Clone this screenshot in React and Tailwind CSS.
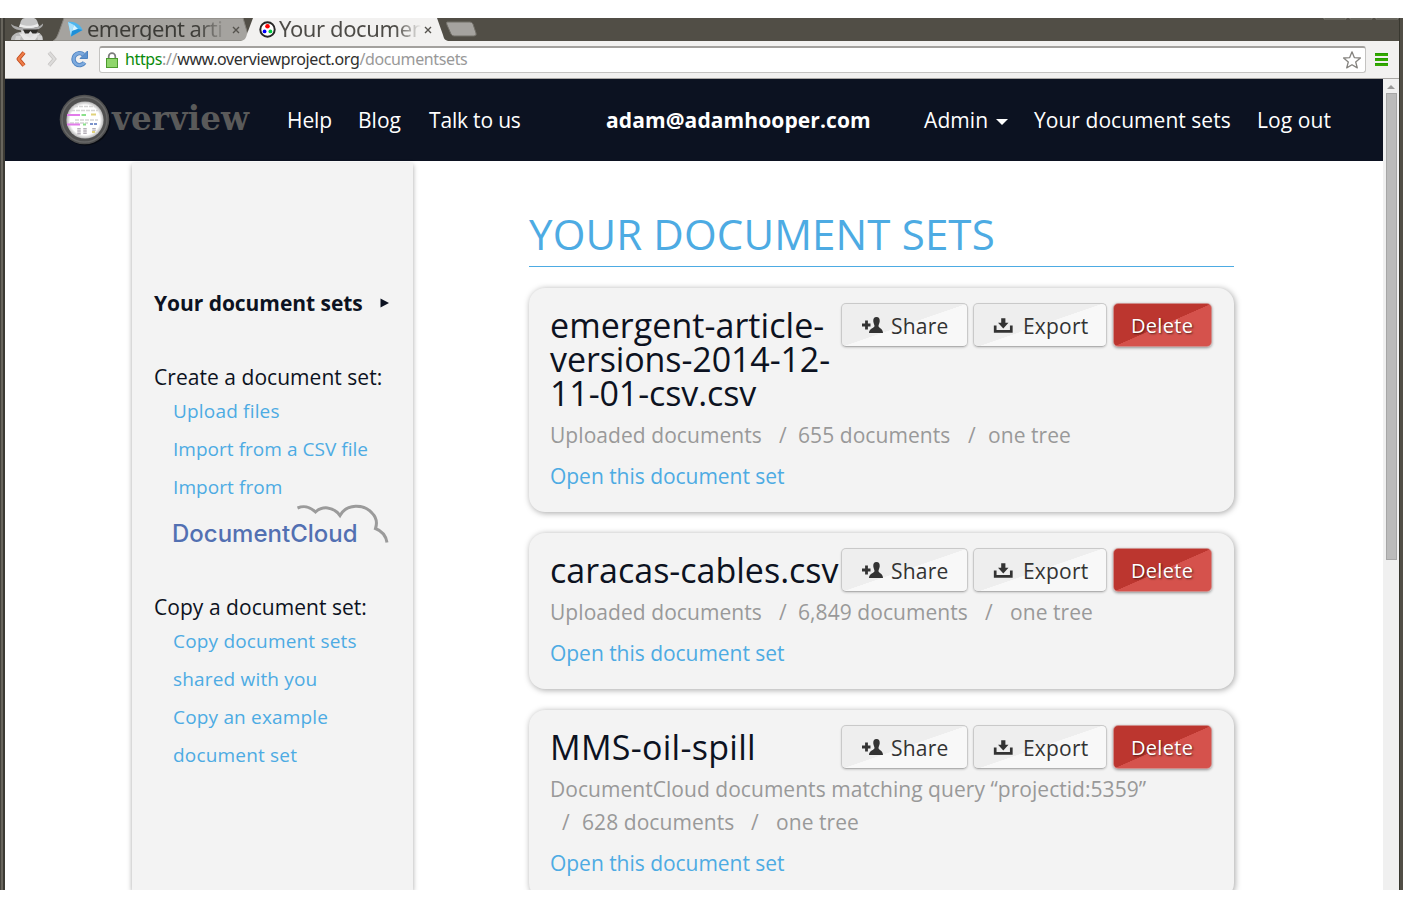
import React from "react";

function Incognito() {
  return (
    <svg width="34" height="23" viewBox="0 0 34 23" className="shrink-0">
      <path d="M0 22 C0 18 3 15 9 14 L25 14 C30 15 32 18 32 22Z" fill="#b9b9b9" />
      <path d="M10 12 H26 V18 L18 22 L11 18Z" fill="#dedede" />
      <path d="M9 8 C9 3 11 0 14 0 H23 C26 1 27 4 27.500 8Z" fill="#c6c6c6" />
      <path d="M9 6 C14 8.500 22 8.500 27 5.500 L28 8.500 C22 11 14 11 8 9Z" fill="#ececec" />
      <path d="M0 6 C4 9 10 10 18 10 C25 10 29 8.500 32 5.500 C33 10 25 13 17 13 C8 13 1 11 0 6Z" fill="#a9a9a9" />
      <path d="M12 11.500 H27 L25.500 15.500 H21.500 L19.500 13 L17.500 15.500 H14Z" fill="#2e2d2a" />
      <path d="M8 15 L13 22 H24 L29 15 L25 16 L19 20 L12 16Z" fill="#e6e6e6" />
      <path d="M5 18 H10 L9 22 H4Z M26 17 L31 18 V22 H27Z" fill="#d2d2d2" />
    </svg>
  );
}

function TabStrip() {
  return (
    <div className="relative h-[23px] overflow-hidden bg-[#514e46]">
      <svg width="1399" height="23" className="absolute left-0 top-0">
        <path d="M48 23 C51 21 52 19 54 14 L59 0 H238 L243 17 C244 20 245 22 248 23Z" fill="#a5a39f" stroke="#85827c" />
        <path d="M236 23 C240 22 241 20 242 16 L248 0 H432 L438 17 C439 21 440 22 443 23Z" fill="#f2f1f0" />
        <path d="M442 4 H465 Q467 4 468 6 L471 15 Q472 18 469 18 H449 Q447 18 446 16 L442 7 Q441 4 442 4Z" fill="#a5a39f" stroke="#716e67" />
        <path d="M1319 0 V1 H1341 V0 M1345 0 V1 H1367 V0 M1371 0 V1 H1393 V0" fill="none" stroke="#807e77" />
      </svg>
      <div className="relative flex h-[23px] items-center">
        <div className="ml-[6px] w-[56px]"><Incognito /></div>
        <svg width="16" height="16" viewBox="0 0 16 16" className="mb-[2px] mr-[4px] shrink-0">
          <path d="M1 1 C7 0 13 3 15.500 9 L4 15.500 Z" fill="#4db5ee" />
          <path d="M1 1 L7 4 L5 10 L4 15.500Z" fill="#a9e0fb" />
          <path d="M7 4 L11 8 L5 10Z" fill="#d8f3ff" />
          <path d="M11 8 L15.500 9 L4 15.500 L5 10Z" fill="#1d8fd8" />
        </svg>
        <div className="-mt-[2px] w-[145px] whitespace-nowrap bg-linear-to-r from-[#3c3b37] from-75% to-[#a5a39f] to-97% bg-clip-text font-['Noto_Sans',sans-serif] text-[22px] leading-[23px] tracking-[-0.55px] text-transparent">emergent arti</div>
        <svg width="8" height="8" viewBox="0 0 8 8" className="shrink-0"><path d="M1 1 L7 7 M7 1 L1 7" stroke="#55534e" strokeWidth="1.400" /></svg>
        <svg width="17" height="17" viewBox="0 0 17 17" className="mb-px ml-[19px] mr-[4px] shrink-0">
          <circle cx="8.500" cy="8.500" r="7.200" fill="#fff" stroke="#262626" strokeWidth="2" />
          <circle cx="8.500" cy="5.200" r="2.300" fill="#f00" />
          <circle cx="5.600" cy="10.400" r="1.900" fill="#00f" />
          <circle cx="11.400" cy="10.400" r="1.900" fill="#0c4" />
        </svg>
        <div className="-ml-px -mt-[2px] w-[145px] whitespace-nowrap bg-linear-to-r from-[#4c4a46] from-80% to-[#f2f1f0] to-98% bg-clip-text font-['Noto_Sans',sans-serif] text-[22px] leading-[23px] tracking-[-0.4px] text-transparent">Your documen</div>
        <svg width="8" height="8" viewBox="0 0 8 8" className="shrink-0"><path d="M1 1 L7 7 M7 1 L1 7" stroke="#55534e" strokeWidth="1.400" /></svg>
      </div>
    </div>
  );
}

function Toolbar() {
  return (
    <div className="flex h-[38px] items-center rounded-t-[3px] border-b border-[#a9a7a4] bg-[#f2f1f0]">
      <svg width="12" height="18" viewBox="0 0 12 18" className="mb-px ml-[10px] shrink-0">
        <path d="M9 2.500 L3.500 9 L9 15.500" fill="none" stroke="#c04a1c" strokeWidth="4" strokeLinejoin="round" />
        <path d="M9 2.500 L3.500 9 L9 15.500" fill="none" stroke="#ee7e4a" strokeWidth="2.200" strokeLinejoin="round" />
      </svg>
      <svg width="12" height="18" viewBox="0 0 12 18" className="mb-px ml-[19px] shrink-0">
        <path d="M3 2.500 L8.500 9 L3 15.500" fill="none" stroke="#c6c4c2" strokeWidth="3.600" />
        <path d="M3 2.500 L8.500 9 L3 15.500" fill="none" stroke="#dcdbda" strokeWidth="2" />
      </svg>
      <svg width="18" height="18" viewBox="0 0 18 18" className="mb-px ml-[13px] shrink-0">
        <path d="M13.500 12.500 A6 6 0 1 1 12.500 4.600" fill="none" stroke="#4f83c0" strokeWidth="4.400" />
        <path d="M16.500 1 V8.500 H9Z" fill="#5f93cf" stroke="#4f83c0" />
        <path d="M13.500 12.500 A6 6 0 1 1 12.500 4.600" fill="none" stroke="#7daade" strokeWidth="2.600" />
      </svg>
      <div className="ml-[10px] flex h-[27px] w-[1267px] items-center rounded-[3px] border border-t-2 border-[#c4c3c1] border-t-[#a3a19e] bg-white">
        <svg width="12" height="16" viewBox="0 0 12 16" className="mb-px ml-[6px] mr-[7px] shrink-0">
          <path d="M2.700 8 V4.500 A3.300 3.300 0 0 1 9.300 4.500 V8" fill="none" stroke="#7c7c7c" strokeWidth="1.700" />
          <rect x="0.500" y="6.500" width="11" height="9" fill="#8fd66b" stroke="#4c9a2e" />
        </svg>
        <span className="-mt-[2px] w-[1217px] whitespace-nowrap font-['Noto_Sans',sans-serif] text-[16px] leading-[22px] tracking-[-0.37px] text-[#999]">
          <span className="text-[#0a8a0a]">https</span>://<span className="text-[#303030]">www.overviewproject.org</span>/documentsets
        </span>
        <svg width="20" height="20" viewBox="0 0 20 20" className="mb-px shrink-0">
          <path d="M10 1.800 L12.300 7.600 L18.400 8 L13.700 12 L15.300 17.900 L10 14.700 L4.700 17.900 L6.300 12 L1.600 8 L7.700 7.600Z" fill="#fff" stroke="#85837f" strokeWidth="1.300" strokeLinejoin="round" />
        </svg>
      </div>
      <svg width="13" height="14" viewBox="0 0 13 14" className="ml-[9px] shrink-0">
        <path d="M0 1.500 H13 M0 6.500 H13 M0 11.500 H13" stroke="#259a00" strokeWidth="3" />
        <path d="M0 2 H13 M0 7 H13 M0 12 H13" stroke="#43b800" strokeWidth="1" />
      </svg>
    </div>
  );
}

function OverviewLogo() {
  return (
    <svg width="200" height="60" viewBox="0 0 200 60" className="ml-[53px] mr-[29px] shrink-0">
      <defs>
        <radialGradient id="lens"><stop offset="0.8" stopColor="#fff" /><stop offset="1" stopColor="#b5b5b5" /></radialGradient>
      </defs>
      <circle cx="27.500" cy="30.500" r="25" fill="#070a12" />
      <circle cx="26.500" cy="29.500" r="24.800" fill="#505050" />
      <circle cx="26.500" cy="29.500" r="22.500" fill="none" stroke="#686868" strokeWidth="1.500" />
      <circle cx="27" cy="30" r="18.600" fill="url(#lens)" />
      <path d="M16 16.500 H38 M13 20.500 H40 M17 30 H40 M12 33 H30" stroke="#d4d4d4" strokeWidth="1.300" strokeDasharray="4 1" />
      <path d="M9 25 H22 M9 34.500 H22" stroke="#e27cea" strokeWidth="2" />
      <path d="M23.500 25 H28 M25 34.500 H28" stroke="#8ae08a" strokeWidth="2" />
      <path d="M33 24.500 H38 M34 42 H37" stroke="#e0d27a" strokeWidth="2" />
      <path d="M32 34 H40" stroke="#7c94cc" strokeWidth="2" strokeDasharray="3 1" />
      <path d="M21 38 V45 M27 38 V44 M36 38 V41" stroke="#b5b0b8" strokeWidth="3.500" strokeDasharray="1.500 0.700" />
      <text x="54" y="40" textLength="137" lengthAdjust="spacingAndGlyphs" fill="#5a5a5a" className="font-['DejaVu_Serif',serif] text-[33px] font-bold">verview</text>
    </svg>
  );
}

function NavBar() {
  return (
    <nav className="flex h-[82px] items-center whitespace-nowrap bg-[#0c1221] text-[21px] leading-[33px] tracking-[0.04px] text-white">
      <OverviewLogo />
      <span className="w-[71px] tracking-[-0.1px]">Help</span>
      <span className="w-[71px]">Blog</span>
      <span className="w-[177px] tracking-[-0.18px]">Talk to us</span>
      <span className="w-[318px] font-bold tracking-[0.1px]">adam@adamhooper.com</span>
      <span className="w-[72px] tracking-[0.1px]">Admin</span>
      <svg width="12" height="6" viewBox="0 0 12 6" className="mr-[26px] mt-[4px] shrink-0"><path d="M0 0 H12 L6 6Z" fill="#fff" /></svg>
      <span className="w-[223px]">Your document sets</span>
      <span className="tracking-[0.1px]">Log out</span>
    </nav>
  );
}

function SideBar() {
  return (
    <aside className="mt-[2px] h-[727px] w-[281px] shrink-0 bg-[#f3f3f3] pl-[22px] pt-[124px] text-[21px] tracking-[0.04px] text-[#0c1221] shadow-[0_2px_5px_rgba(0,0,0,0.35)]">
      <div className="flex h-[34px] items-center whitespace-nowrap font-bold">
        <span className="w-[226px] tracking-[-0.05px]">Your document sets</span>
        <svg width="9" height="10" viewBox="0 0 9 10" className="mb-[3px]"><path d="M0.500 0.500 L9 5 L0.500 9.500Z" fill="#0c1221" /></svg>
      </div>
      <div className="mt-[40px] h-[31px] whitespace-nowrap leading-[33px]">Create a document set:</div>
      <ul className="pl-[19px] text-[19px] leading-[38px] tracking-[0.18px] text-[#4dabe3]">
        <li>Upload files</li>
        <li className="tracking-[0.03px]">Import from a CSV file</li>
        <li className="tracking-[0.08px]">Import from</li>
      </ul>
      <div className="relative ml-[18px] h-[40px] pt-[11px]">
        <span className="font-['Inter',sans-serif] text-[24px] font-medium leading-[34px] tracking-[0px] text-[#5270b2]">DocumentCloud</span>
        <svg width="94" height="40" viewBox="0 0 94 40" className="absolute left-[125px] top-[-2px]">
          <path d="M0.500 4 C8 1 13 3 18.500 8 C25 2 36 2 43 11.500 C50 -1 67 0 75 9 C80 14 80 20 78.500 24.500 C85 27 89 32 90 38.500" fill="none" stroke="#9b9b9b" strokeWidth="3" />
        </svg>
      </div>
      <div className="mt-[45px] h-[31px] whitespace-nowrap leading-[33px]">Copy a document set:</div>
      <ul className="pl-[19px] text-[19px] leading-[38px] tracking-[0.18px] text-[#4dabe3]">
        <li>Copy document sets<br />shared with you</li>
        <li>Copy an example<br />document set</li>
      </ul>
    </aside>
  );
}

const buttonBase = "flex h-[44px] items-center rounded-[5px] border pt-px";
const buttonLight = "border-[#c9c9c9] border-b-[#b0b0b0] bg-[linear-gradient(161deg,#eeeeee_50%,#f8f8f8_50.5%)] shadow-[0_1px_2px_rgba(0,0,0,0.15)]";

function Actions() {
  return (
    <div className="-mb-[5px] -mt-[5px] flex h-[44px] shrink-0 whitespace-nowrap text-[21px] leading-[30px] tracking-[0.2px] text-[#333]">
      <button className={`${buttonBase} ${buttonLight} mr-[5px] w-[127px] pl-[20px]`}>
        <svg width="22" height="16" viewBox="0 0 22 16" className="mb-px mr-[7px]">
          <path d="M0 8 H8.500 M4.500 3.500 V12.500" stroke="#333" strokeWidth="2.800" />
          <path d="M14.500 0 C17 0 18 2 17.700 4.500 C17.500 6.500 16.500 7.500 16.500 9 C16.500 11 21 11.500 21 16 H7 C7 11.500 12.500 11 12.500 9 C12.500 7.500 11.500 6.500 11.300 4.500 C11 2 12 0 14.500 0Z" fill="#333" />
        </svg>
        Share
      </button>
      <button className={`${buttonBase} ${buttonLight} mr-[6px] w-[134px] pl-[19px]`}>
        <svg width="20" height="16" viewBox="0 0 20 16" className="mb-px mr-[10px]">
          <path d="M2.200 8.500 V14.300 H18.300 V8.500" fill="none" stroke="#333" strokeWidth="2.700" />
          <path d="M8.200 1.300 H12.400 V5.800 H15.500 L10.300 11.500 L5 5.800 H8.200Z" fill="#333" />
        </svg>
        Export
      </button>
      <button className={`${buttonBase} w-[99px] border-[#cf8d8a] bg-[linear-gradient(156.3deg,#bc362f_50%,#d5524c_50.5%)] pl-[17px] text-[20px] tracking-[0.3px] text-white shadow-[0_1px_3px_rgba(0,0,0,0.4)] [text-shadow:1px_1px_2px_rgba(0,0,0,0.6)]`}>Delete</button>
    </div>
  );
}

function Card({ title, titleClass, children, className }) {
  return (
    <article className={`rounded-[16px] bg-[#f3f3f3] pb-[19px] pl-[21px] pr-[21px] pt-[20px] shadow-[1px_1px_6px_rgba(0,0,0,0.36)] ${className}`}>
      <div className="flex">
        <h2 className={`w-[291px] shrink-0 whitespace-nowrap text-[34px] leading-[34px] text-[#0c1221] ${titleClass}`}>
          {title.map((line) => <div key={line}>{line}</div>)}
        </h2>
        <Actions />
      </div>
      <div className="mt-[9px] whitespace-nowrap text-[21px] leading-[33px] tracking-[0.06px] text-[#999]">{children}</div>
      <a className="mt-[8px] block text-[21px] leading-[33px] tracking-[-0.03px] text-[#4dabe3]">Open this document set</a>
    </article>
  );
}

function Main() {
  return (
    <main className="ml-[116px] w-[705px] shrink-0 pt-[44px]">
      <h1 className="h-[62px] whitespace-nowrap border-b border-[#4dabe3] text-[42px] leading-[58px] tracking-[0.15px] text-[#4dabe3]">YOUR DOCUMENT SETS</h1>
      <Card className="mt-[21px]" titleClass="tracking-[-0.1px] first-line:tracking-[0.05px]" title={["emergent-article-", "versions-2014-12-", "11-01-csv.csv"]}>
        <div className="flex">
          <span className="w-[229px]">Uploaded documents</span>
          <span className="w-[19px]">/</span>
          <span className="w-[170px]">655 documents</span>
          <span className="w-[20px]">/</span>
          <span>one tree</span>
        </div>
      </Card>
      <Card className="mt-[21px]" title={["caracas-cables.csv"]}>
        <div className="flex">
          <span className="w-[229px]">Uploaded documents</span>
          <span className="w-[19px]">/</span>
          <span className="w-[187px]">6,849 documents</span>
          <span className="w-[25px]">/</span>
          <span>one tree</span>
        </div>
      </Card>
      <Card className="mt-[21px]" titleClass="tracking-[0.3px]" title={["MMS-oil-spill"]}>
        <div className="tracking-[0.04px]">DocumentCloud documents matching query “projectid:5359”</div>
        <div className="flex pl-[12px]">
          <span className="w-[20px]">/</span>
          <span className="w-[169px]">628 documents</span>
          <span className="w-[25px]">/</span>
          <span>one tree</span>
        </div>
      </Card>
    </main>
  );
}

function ScrollBar() {
  return (
    <div className="flex h-[811px] w-[16px] shrink-0 flex-col items-center bg-[#f0f0f0]">
      <svg width="8" height="4" viewBox="0 0 8 4" className="mb-[4px] mt-[6px] shrink-0"><path d="M4 0 L8 4 H0Z" fill="#999" /></svg>
      <div className="h-[467px] w-[11px] border border-[#a6a6a6] bg-[#bbbbbb]" />
    </div>
  );
}

export default function App() {
  return (
    <div className="h-[908px] w-[1403px] overflow-hidden bg-white pt-[18px] font-['Open_Sans',sans-serif]">
      <div className="flex h-[872px] overflow-hidden">
        <div className="w-[5px] shrink-0 border-l border-r-2 border-l-[#45433d] border-r-[#3c3a34] bg-[#68655d]" />
        <div className="w-[1394px] shrink-0">
          <TabStrip />
          <Toolbar />
          <div className="flex">
            <div className="h-[811px] w-[1378px] overflow-hidden bg-white">
              <NavBar />
              <div className="flex pl-[127px]">
                <SideBar />
                <Main />
              </div>
            </div>
            <ScrollBar />
          </div>
        </div>
        <div className="w-[4px] shrink-0 border-l border-[#38372f] bg-[#514e46]" />
      </div>
    </div>
  );
}
